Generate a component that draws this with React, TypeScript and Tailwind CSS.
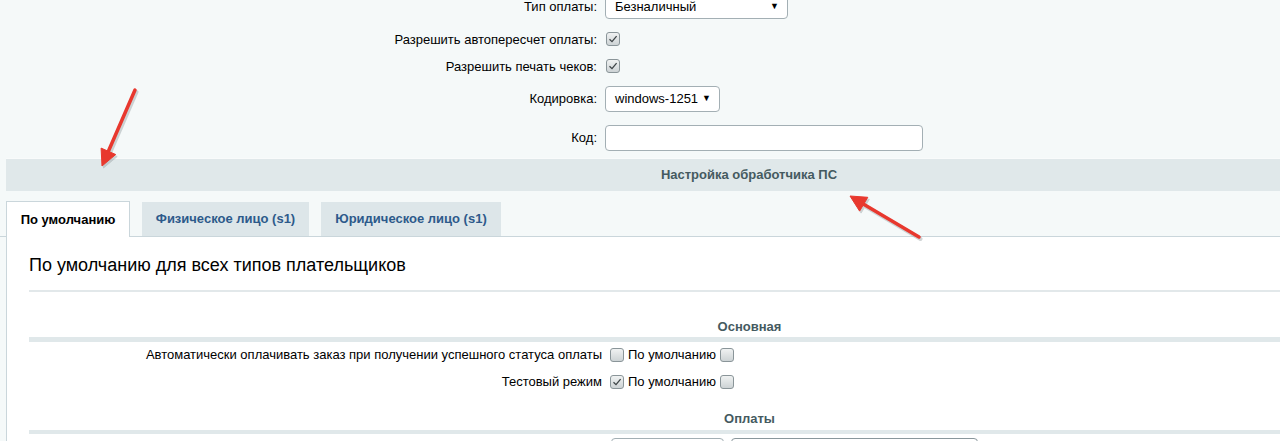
import React from "react";

const Check = ({ checked = false }: { checked?: boolean }) => (
  <span className="inline-flex h-[14px] w-[14px] shrink-0 items-center justify-center rounded-[3px] border border-[#8a9599] bg-linear-to-b from-[#f0f2f2] to-[#cdd3d5]">
    {checked ? (
      <svg width="10" height="10" viewBox="0 0 10 10">
        <path d="M1.5 5.2 L4 7.6 L8.6 2.2" fill="none" stroke="#3d4446" strokeWidth="1.3" />
      </svg>
    ) : null}
  </span>
);

const Select = ({ value, w }: { value: string; w: string }) => (
  <div className={`flex h-full items-center justify-between rounded-[4px] border border-[#a3afb4] bg-white pl-[9px] pr-[8px] text-[13px] text-black ${w}`}>
    <span>{value}</span>
    <span className="text-[9px]">▼</span>
  </div>
);

const FormRow = ({ label, className, children }: { label: string; className: string; children: React.ReactNode }) => (
  <div className={`flex items-center ${className}`}>
    <div className="w-[597px] text-right">{label}</div>
    <div className="ml-2 flex h-full items-center">{children}</div>
  </div>
);

const OptRow = ({ label, checked, className }: { label: string; checked?: boolean; className: string }) => (
  <div className={`flex h-[20px] items-center ${className}`}>
    <div className="w-[573px] text-right">{label}</div>
    <div className="ml-2 flex items-center gap-1">
      <Check checked={checked} />
      <span>По умолчанию</span>
      <Check />
    </div>
  </div>
);

const Arrows = () => (
  <svg className="pointer-events-none absolute left-0 top-0" width="1280" height="441">
    <g fill="#9aa3a6" stroke="#9aa3a6" opacity="0.45" transform="translate(1.5 2)">
      <line x1="135" y1="90" x2="108.4" y2="151.3" strokeWidth="4" strokeLinecap="round" />
      <polygon points="102,166 115.7,154.5 101.1,148.1" />
      <line x1="919" y1="237" x2="863.7" y2="204.2" strokeWidth="4" strokeLinecap="round" />
      <polygon points="850,196 867.8,197.3 859.6,211.1" />
    </g>
    <g fill="#e8382e" stroke="#e8382e">
      <line x1="135" y1="90" x2="108.4" y2="151.3" strokeWidth="3.5" strokeLinecap="round" />
      <polygon points="102,166 115.7,154.5 101.1,148.1" />
      <line x1="919" y1="237" x2="863.7" y2="204.2" strokeWidth="3.5" strokeLinecap="round" />
      <polygon points="850,196 867.8,197.3 859.6,211.1" />
    </g>
  </svg>
);

export default function App() {
  return (
    <div className="relative h-[441px] w-full overflow-hidden bg-[#f5f9f9] font-['Liberation_Sans',Arial,sans-serif] text-[13px] text-black">
      <div className="w-[1498px]">
        {/* top form */}
        <FormRow label="Тип оплаты:" className="-mt-[6px] h-[25px]">
          <Select value="Безналичный" w="w-[183px]" />
        </FormRow>
        <FormRow label="Разрешить автопересчет оплаты:" className="mt-[11px] h-[20px]">
          <span className="ml-px"><Check checked /></span>
        </FormRow>
        <FormRow label="Разрешить печать чеков:" className="mt-[7px] h-[20px]">
          <span className="ml-px"><Check checked /></span>
        </FormRow>
        <FormRow label="Кодировка:" className="mt-[9px] h-[26px]">
          <Select value="windows-1251" w="w-[115px]" />
        </FormRow>
        <FormRow label="Код:" className="mt-[13px] h-[26px]">
          <div className="h-full w-[318px] rounded-[4px] border border-[#a3afb4] bg-white" />
        </FormRow>

        {/* section header */}
        <div className="mx-[6px] mt-[7px] flex h-[33px] items-center justify-center border-t border-[#f9fbfb] bg-[#e0e8ea] font-bold text-[#455a60]">
          Настройка обработчика ПС
        </div>

        {/* tabs */}
        <div className="flex h-[46px] items-end gap-3 border-b border-[#cad6db] pl-[6px]">
          <div className="-mb-px flex h-[36px] w-[124px] items-center justify-center border border-b-0 border-[#cad6db] bg-white font-bold">
            По умолчанию
          </div>
          <div className="flex h-[34px] w-[167px] items-center justify-center bg-[#dde6e9] font-bold text-[#2d5a8b]">
            Физическое лицо (s1)
          </div>
          <div className="flex h-[34px] w-[180px] items-center justify-center bg-[#dde6e9] font-bold text-[#2d5a8b]">
            Юридическое лицо (s1)
          </div>
        </div>

        {/* content */}
        <div className="mx-[6px] h-[220px] border-l border-[#cad6db] bg-white px-[22px]">
          <div className="pt-[17px] text-[18px] leading-[22px]">По умолчанию для всех типов плательщиков</div>
          <div className="mt-[14px] h-[2px] bg-[#e2e8ea]" />

          <div className="mt-[27px] text-center font-bold leading-[16px] text-[#455a60]">Основная</div>
          <div className="mt-[2px] h-[5px] bg-[#e0e8ea]" />
          <OptRow label="Автоматически оплачивать заказ при получении успешного статуса оплаты" className="mt-[3px]" />
          <OptRow label="Тестовый режим" checked className="mt-[7px]" />

          <div className="mt-[19px] text-center font-bold leading-[16px] text-[#455a60]">Оплаты</div>
          <div className="mt-[3px] h-[4px] bg-[#e0e8ea]" />
          <div className="mt-[4px] flex h-[26px]">
            <div className="ml-[582px] h-full w-[113px] rounded-[4px] border border-[#a3afb4] bg-white" />
            <div className="ml-[7px] h-full w-[247px] rounded-[4px] border border-[#8a979c] bg-white" />
          </div>
        </div>
      </div>
      <Arrows />
    </div>
  );
}
